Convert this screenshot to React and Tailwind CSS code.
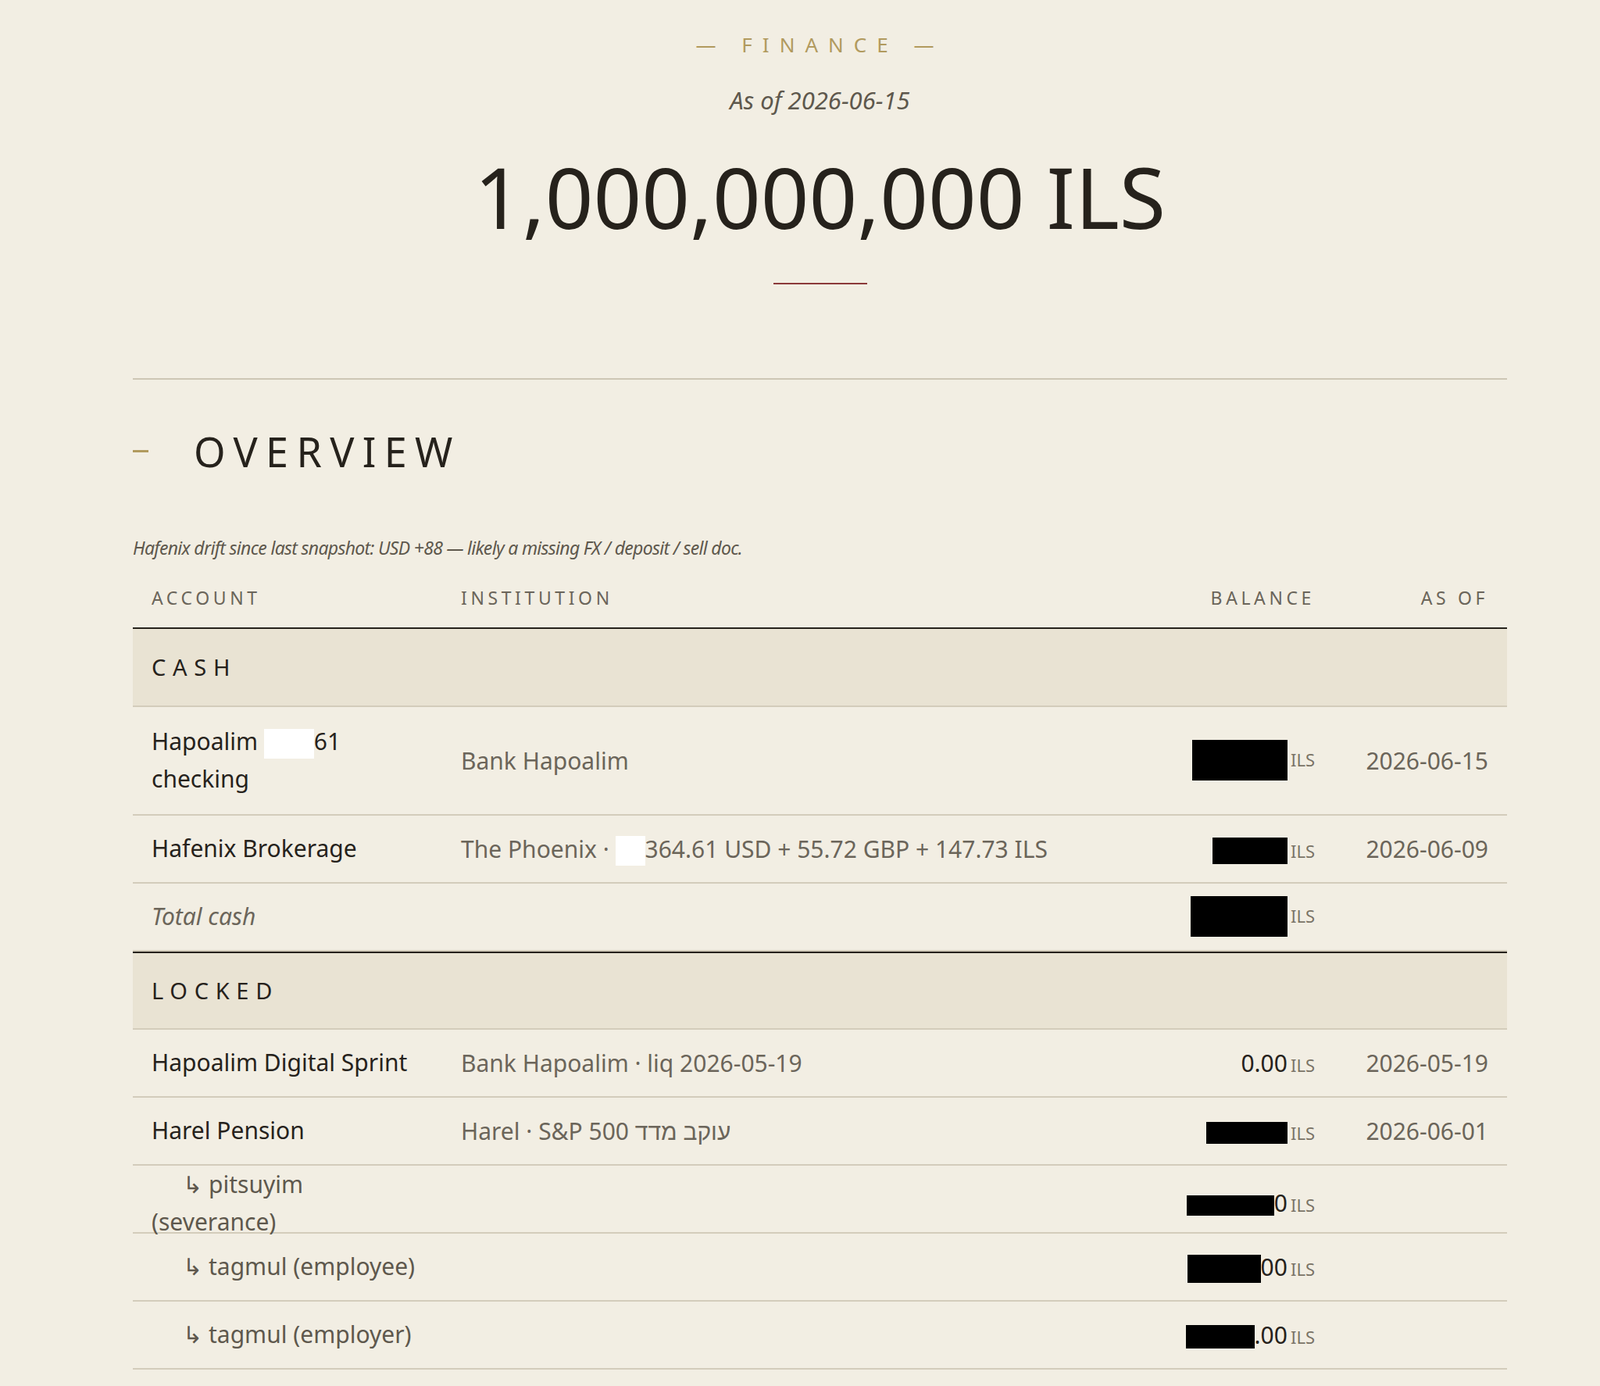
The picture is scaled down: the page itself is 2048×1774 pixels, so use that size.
const Redact = ({ w, h = 'h-[52px]', white }) => (
  <span className={`inline-block align-middle ${h} ${white ? 'bg-white' : 'bg-black'}`} style={{ width: w }} />
);

const Ils = () => <span className="ml-1 text-[22px] text-[#7a7366]">ILS</span>;

function Row({ account, institution, balance, asOf, sub, italic, tall }) {
  return (
    <div className={`grid grid-cols-[396px_1fr_320px_222px] items-center border-b-2 border-[#d3ccbb] ${tall ? 'h-[139px]' : 'h-[87px]'}`}>
      <div className={`px-6 text-[30px] leading-[48px] ${italic ? 'italic text-[#6b655a]' : 'text-[#26221c]'}`}>
        {sub ? (
          <span className="pl-10 text-[#5e584d]"><span className="mr-2">↳</span>{account}</span>
        ) : account}
      </div>
      <div className="px-6 text-[30px] text-[#6b655a] whitespace-nowrap">{institution}</div>
      <div className="px-6 text-right text-[30px] text-[#26221c] whitespace-nowrap">{balance}{balance && <Ils />}</div>
      <div className="px-6 text-right text-[30px] text-[#6b655a] whitespace-nowrap">{asOf}</div>
    </div>
  );
}

function Band({ label, top }) {
  return (
    <div className={`h-[100px] flex items-center px-6 bg-[#e9e3d3] border-b-2 border-[#d3ccbb] ${top ? 'border-t-2 border-t-[#26221c]' : ''}`}>
      <span className="text-[29px] tracking-[0.3em] text-[#26221c]">{label}</span>
    </div>
  );
}

export default function App() {
  return (
    <div className="min-h-[1774px] bg-[#f2eee3] font-[family-name:'Liberation_Serif',serif] text-[#26221c]">
      <div className="ml-[170px] w-[1759px]">
        <div className="flex flex-col items-center pt-[38px]">
          <div className="text-[26px] tracking-[0.5em] text-[#b19a5e]">— FINANCE —</div>
          <div className="mt-[28px] text-[31px] italic text-[#5e584d]">As of 2026-06-15</div>
          <div className="mt-[46px] text-[108px] leading-none">1,000,000,000 ILS</div>
          <div className="mt-[56px] h-[2px] w-[120px] bg-[#8b3a3a]" />
        </div>
        <div className="mt-[120px] border-t-2 border-[#cdc6b5]">
          <div className="mt-[66px] flex items-center">
            <span className="w-[20px] h-[3px] bg-[#b19a5e]" />
            <span className="ml-[58px] text-[52px] tracking-[0.2em] leading-none">OVERVIEW</span>
          </div>
          <p className="mt-[80px] text-[23px] italic text-[#5e584d] tracking-[-0.03em]">
            Hafenix drift since last snapshot: USD +88 — likely a missing FX / deposit / sell doc.
          </p>
          <div className="mt-[30px] grid grid-cols-[396px_1fr_320px_222px] pb-[20px] border-b-2 border-[#26221c] text-[23px] tracking-[0.2em] text-[#6b655a]">
            <div className="px-6">ACCOUNT</div>
            <div className="px-6">INSTITUTION</div>
            <div className="px-6 text-right">BALANCE</div>
            <div className="px-6 text-right">AS OF</div>
          </div>
          <Band label="CASH" />
          <Row tall account={<>Hapoalim <Redact w={64} h="h-[38px]" white />61<br />checking</>} institution="Bank Hapoalim" balance={<Redact w={122} />} asOf="2026-06-15" />
          <Row account="Hafenix Brokerage" institution={<>The Phoenix · <Redact w={38} h="h-[38px]" white />364.61 USD + 55.72 GBP + 147.73 ILS</>} balance={<Redact w={96} h="h-[34px]" />} asOf="2026-06-09" />
          <Row italic account="Total cash" balance={<Redact w={124} />} />
          <Band label="LOCKED" top />
          <Row account="Hapoalim Digital Sprint" institution="Bank Hapoalim · liq 2026-05-19" balance="0.00" asOf="2026-05-19" />
          <Row account="Harel Pension" institution={<>Harel · S&amp;P 500 <span dir="rtl">עוקב מדד</span></>} balance={<Redact w={104} h="h-[28px]" />} asOf="2026-06-01" />
          <Row sub account="pitsuyim (severance)" balance={<><Redact w={112} h="h-[26px]" />0</>} />
          <Row sub account="tagmul (employee)" balance={<><Redact w={94} h="h-[36px]" />00</>} />
          <Row sub account="tagmul (employer)" balance={<><Redact w={88} h="h-[30px]" />.00</>} />
        </div>
      </div>
    </div>
  );
}
